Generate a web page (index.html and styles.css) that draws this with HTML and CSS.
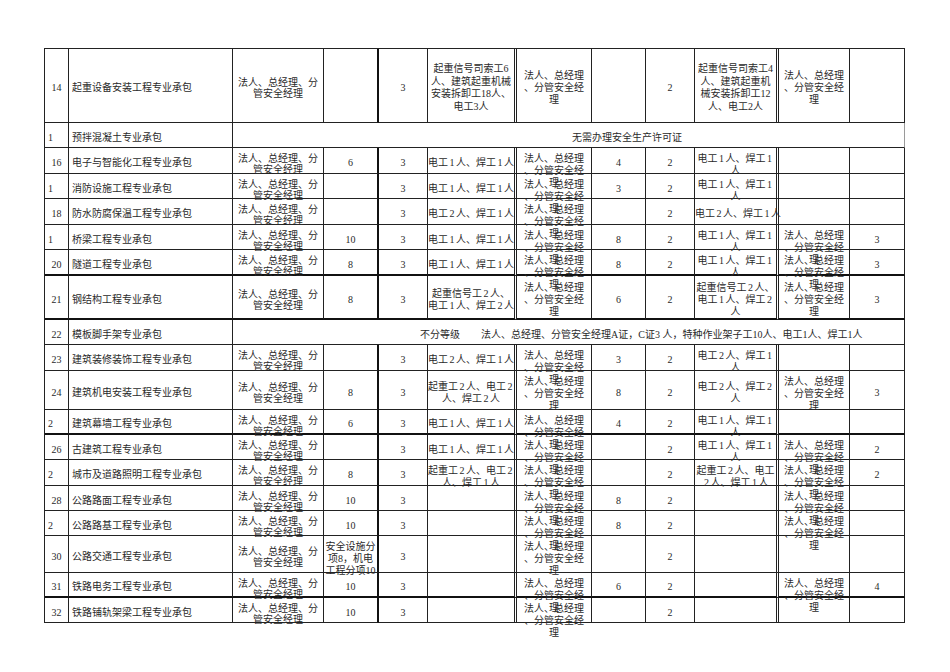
FILE: index.html
```html
<!DOCTYPE html>
<html lang="zh">
<head>
<meta charset="utf-8">
<title>专业承包资质人员配置表</title>
<link rel="stylesheet" href="styles.css">
</head>
<body>
<div class="page">
<div class="sheet">

<div class="r h74">
<div class="c"><span>14</span></div>
<div class="c nm"><span>起重设备安装工程专业承包</span></div>
<div class="c p3"><span>法人、总经理、分<br>管安全经理</span></div>
<div class="c"><span></span></div>
<div class="c"><span>3</span></div>
<div class="c lw"><span>起重信号司索工6<br>人、建筑起重机械<br>安装拆卸工18人、<br>电工3人</span></div>
<div class="c"><span>法人、总经理<br>、分管安全经<br>理</span></div>
<div class="c"><span></span></div>
<div class="c"><span>2</span></div>
<div class="c lw"><span>起重信号司索工4<br>人、建筑起重机<br>械安装拆卸工12<br>人、电工2人</span></div>
<div class="c"><span>法人、总经理<br>、分管安全经<br>理</span></div>
<div class="c"><span></span></div>
</div>

<div class="r h25">
<div class="c nl"><span>1</span></div>
<div class="c nm"><span>预拌混凝土专业承包</span></div>
<div class="c merged m1"><span>无需办理安全生产许可证</span></div>
</div>

<div class="r h26">
<div class="c"><span>16</span></div>
<div class="c nm"><span>电子与智能化工程专业承包</span></div>
<div class="c p3"><span>法人、总经理、分<br>管安全经理</span></div>
<div class="c"><span>6</span></div>
<div class="c"><span>3</span></div>
<div class="c"><span>电工<i>1</i>人、焊工<i>1</i>人</span></div>
<div class="c"><span>法人、总经理<br>、分管安全经<br>理</span></div>
<div class="c"><span>4</span></div>
<div class="c"><span>2</span></div>
<div class="c"><span>电工<i>1</i>人、焊工<i>1</i><br>人</span></div>
<div class="c"><span></span></div>
<div class="c"><span></span></div>
</div>

<div class="r h25">
<div class="c nl"><span>1</span></div>
<div class="c nm"><span>消防设施工程专业承包</span></div>
<div class="c p3"><span>法人、总经理、分<br>管安全经理</span></div>
<div class="c"><span></span></div>
<div class="c"><span>3</span></div>
<div class="c"><span>电工<i>1</i>人、焊工<i>1</i>人</span></div>
<div class="c"><span>法人、总经理<br>、分管安全经<br>理</span></div>
<div class="c"><span>3</span></div>
<div class="c"><span>2</span></div>
<div class="c"><span>电工<i>1</i>人、焊工<i>1</i><br>人</span></div>
<div class="c"><span></span></div>
<div class="c"><span></span></div>
</div>

<div class="r h26">
<div class="c"><span>18</span></div>
<div class="c nm"><span>防水防腐保温工程专业承包</span></div>
<div class="c p3"><span>法人、总经理、分<br>管安全经理</span></div>
<div class="c"><span></span></div>
<div class="c"><span>3</span></div>
<div class="c"><span>电工<i>2</i>人、焊工<i>1</i>人</span></div>
<div class="c"><span>法人、总经理<br>、分管安全经<br>理</span></div>
<div class="c"><span></span></div>
<div class="c"><span>2</span></div>
<div class="c"><span>电工<i>2</i>人、焊工<i>1</i>人</span></div>
<div class="c"><span></span></div>
<div class="c"><span></span></div>
</div>

<div class="r h25">
<div class="c nl"><span>1</span></div>
<div class="c nm"><span>桥梁工程专业承包</span></div>
<div class="c p3"><span>法人、总经理、分<br>管安全经理</span></div>
<div class="c"><span>10</span></div>
<div class="c"><span>3</span></div>
<div class="c"><span>电工<i>1</i>人、焊工<i>1</i>人</span></div>
<div class="c"><span>法人、总经理<br>、分管安全经<br>理</span></div>
<div class="c"><span>8</span></div>
<div class="c"><span>2</span></div>
<div class="c"><span>电工<i>1</i>人、焊工<i>1</i><br>人</span></div>
<div class="c"><span>法人、总经理<br>、分管安全经<br>理</span></div>
<div class="c"><span>3</span></div>
</div>

<div class="r h26 thick">
<div class="c"><span>20</span></div>
<div class="c nm"><span>隧道工程专业承包</span></div>
<div class="c p3"><span>法人、总经理、分<br>管安全经理</span></div>
<div class="c"><span>8</span></div>
<div class="c"><span>3</span></div>
<div class="c"><span>电工<i>1</i>人、焊工<i>1</i>人</span></div>
<div class="c"><span>法人、总经理<br>、分管安全经<br>理</span></div>
<div class="c"><span>8</span></div>
<div class="c"><span>2</span></div>
<div class="c"><span>电工<i>1</i>人、焊工<i>1</i><br>人</span></div>
<div class="c"><span>法人、总经理<br>、分管安全经<br>理</span></div>
<div class="c"><span>3</span></div>
</div>

<div class="r h44 thick">
<div class="c"><span>21</span></div>
<div class="c nm"><span>钢结构工程专业承包</span></div>
<div class="c p3"><span>法人、总经理、分<br>管安全经理</span></div>
<div class="c"><span>8</span></div>
<div class="c"><span>3</span></div>
<div class="c"><span>起重信号工<i>2</i>人、<br>电工<i>1</i>人、焊工<i>2</i>人</span></div>
<div class="c"><span>法人、总经理<br>、分管安全经<br>理</span></div>
<div class="c"><span>6</span></div>
<div class="c"><span>2</span></div>
<div class="c"><span>起重信号工<i>2</i>人、<br>电工<i>1</i>人、焊工<i>2</i><br>人</span></div>
<div class="c"><span>法人、总经理<br>、分管安全经<br>理</span></div>
<div class="c"><span>3</span></div>
</div>

<div class="r h25">
<div class="c"><span>22</span></div>
<div class="c nm"><span>模板脚手架专业承包</span></div>
<div class="c merged m2"><span>不分等级<b class="gap"></b>法人、总经理、分管安全经理A证，C证3 人，特种作业架子工10人、电工1人、焊工1人</span></div>
</div>

<div class="r h26">
<div class="c"><span>23</span></div>
<div class="c nm"><span>建筑装修装饰工程专业承包</span></div>
<div class="c p3"><span>法人、总经理、分<br>管安全经理</span></div>
<div class="c"><span></span></div>
<div class="c"><span>3</span></div>
<div class="c"><span>电工<i>2</i>人、焊工<i>1</i>人</span></div>
<div class="c"><span>法人、总经理<br>、分管安全经<br>理</span></div>
<div class="c"><span>3</span></div>
<div class="c"><span>2</span></div>
<div class="c"><span>电工<i>2</i>人、焊工<i>1</i><br>人</span></div>
<div class="c"><span></span></div>
<div class="c"><span></span></div>
</div>

<div class="r h39">
<div class="c"><span>24</span></div>
<div class="c nm"><span>建筑机电安装工程专业承包</span></div>
<div class="c p3"><span>法人、总经理、分<br>管安全经理</span></div>
<div class="c"><span>8</span></div>
<div class="c"><span>3</span></div>
<div class="c"><span>起重工<i>2</i>人、电工<i>2</i><br>人、焊工<i>2</i>人</span></div>
<div class="c"><span>法人、总经理<br>、分管安全经<br>理</span></div>
<div class="c"><span>8</span></div>
<div class="c"><span>2</span></div>
<div class="c"><span>电工<i>2</i>人、焊工<i>2</i><br>人</span></div>
<div class="c"><span>法人、总经理<br>、分管安全经<br>理</span></div>
<div class="c"><span>3</span></div>
</div>

<div class="r h25 thick">
<div class="c nl"><span>2</span></div>
<div class="c nm"><span>建筑幕墙工程专业承包</span></div>
<div class="c p3"><span>法人、总经理、分<br>管安全经理</span></div>
<div class="c"><span>6</span></div>
<div class="c"><span>3</span></div>
<div class="c"><span>电工<i>1</i>人、焊工<i>1</i>人</span></div>
<div class="c"><span>法人、总经理<br>、分管安全经<br>理</span></div>
<div class="c"><span>4</span></div>
<div class="c"><span>2</span></div>
<div class="c"><span>电工<i>1</i>人、焊工<i>1</i><br>人</span></div>
<div class="c"><span></span></div>
<div class="c"><span></span></div>
</div>

<div class="r h25">
<div class="c"><span>26</span></div>
<div class="c nm"><span>古建筑工程专业承包</span></div>
<div class="c p3"><span>法人、总经理、分<br>管安全经理</span></div>
<div class="c"><span></span></div>
<div class="c"><span>3</span></div>
<div class="c"><span>电工<i>1</i>人、焊工<i>1</i>人</span></div>
<div class="c"><span>法人、总经理<br>、分管安全经<br>理</span></div>
<div class="c"><span></span></div>
<div class="c"><span>2</span></div>
<div class="c"><span>电工<i>1</i>人、焊工<i>1</i><br>人</span></div>
<div class="c"><span>法人、总经理<br>、分管安全经<br>理</span></div>
<div class="c"><span>2</span></div>
</div>

<div class="r h26">
<div class="c nl"><span>2</span></div>
<div class="c nm"><span>城市及道路照明工程专业承包</span></div>
<div class="c p3"><span>法人、总经理、分<br>管安全经理</span></div>
<div class="c"><span>8</span></div>
<div class="c"><span>3</span></div>
<div class="c"><span>起重工<i>2</i>人、电工<i>2</i><br>人、焊工<i>1</i>人</span></div>
<div class="c"><span>法人、总经理<br>、分管安全经<br>理</span></div>
<div class="c"><span></span></div>
<div class="c"><span>2</span></div>
<div class="c"><span>起重工<i>2</i>人、电工<br><i>2</i>人、焊工<i>1</i>人</span></div>
<div class="c"><span>法人、总经理<br>、分管安全经<br>理</span></div>
<div class="c"><span>2</span></div>
</div>

<div class="r h25">
<div class="c"><span>28</span></div>
<div class="c nm"><span>公路路面工程专业承包</span></div>
<div class="c p3"><span>法人、总经理、分<br>管安全经理</span></div>
<div class="c"><span>10</span></div>
<div class="c"><span>3</span></div>
<div class="c"><span></span></div>
<div class="c"><span>法人、总经理<br>、分管安全经<br>理</span></div>
<div class="c"><span>8</span></div>
<div class="c"><span>2</span></div>
<div class="c"><span></span></div>
<div class="c"><span>法人、总经理<br>、分管安全经<br>理</span></div>
<div class="c"><span></span></div>
</div>

<div class="r h25">
<div class="c nl"><span>2</span></div>
<div class="c nm"><span>公路路基工程专业承包</span></div>
<div class="c p3"><span>法人、总经理、分<br>管安全经理</span></div>
<div class="c"><span>10</span></div>
<div class="c"><span>3</span></div>
<div class="c"><span></span></div>
<div class="c"><span>法人、总经理<br>、分管安全经<br>理</span></div>
<div class="c"><span>8</span></div>
<div class="c"><span>2</span></div>
<div class="c"><span></span></div>
<div class="c"><span>法人、总经理<br>、分管安全经<br>理</span></div>
<div class="c"><span></span></div>
</div>

<div class="r h37">
<div class="c"><span>30</span></div>
<div class="c nm"><span>公路交通工程专业承包</span></div>
<div class="c p3"><span>法人、总经理、分<br>管安全经理</span></div>
<div class="c"><span>安全设施分<br>项8，机电<br>工程分项10</span></div>
<div class="c"><span>3</span></div>
<div class="c"><span></span></div>
<div class="c"><span>法人、总经理<br>、分管安全经<br>理</span></div>
<div class="c"><span></span></div>
<div class="c"><span>2</span></div>
<div class="c"><span></span></div>
<div class="c"><span></span></div>
<div class="c"><span></span></div>
</div>

<div class="r h25 thick">
<div class="c"><span>31</span></div>
<div class="c nm"><span>铁路电务工程专业承包</span></div>
<div class="c p3"><span>法人、总经理、分<br>管安全经理</span></div>
<div class="c"><span>10</span></div>
<div class="c"><span>3</span></div>
<div class="c"><span></span></div>
<div class="c"><span>法人、总经理<br>、分管安全经<br>理</span></div>
<div class="c"><span>6</span></div>
<div class="c"><span>2</span></div>
<div class="c"><span></span></div>
<div class="c"><span>法人、总经理<br>、分管安全经<br>理</span></div>
<div class="c"><span>4</span></div>
</div>

<div class="r h25">
<div class="c"><span>32</span></div>
<div class="c nm"><span>铁路铺轨架梁工程专业承包</span></div>
<div class="c p3"><span>法人、总经理、分<br>管安全经理</span></div>
<div class="c"><span>10</span></div>
<div class="c"><span>3</span></div>
<div class="c"><span></span></div>
<div class="c"><span>法人、总经理<br>、分管安全经<br>理</span></div>
<div class="c"><span></span></div>
<div class="c"><span>2</span></div>
<div class="c"><span></span></div>
<div class="c"><span></span></div>
<div class="c"><span></span></div>
</div>

</div>
</div>
</body>
</html>
```

FILE: styles.css
```css
html, body {
  margin: 0;
  padding: 0;
  background: #ffffff;
}

body {
  font-family: "Liberation Serif", "Noto Sans CJK SC", serif;
  font-size: 10px;
  color: #2a2a2a;
  text-autospace: no-autospace;
  min-height: 672px;
}

.page {
  padding: 48px 0 0 44px;
}

.sheet {
  width: 861px;
  box-sizing: border-box;
  border-top: 1px solid #222;
  border-left: 1px solid #222;
}

.r {
  display: grid;
  grid-template-columns: 24px 164px 91px 55px 49px 89px 75px 54px 49px 84px 71px 55px;
  grid-template-rows: 100%;
}

.h25 { height: 25px; }
.h26 { height: 26px; }
.h37 { height: 37px; }
.h39 { height: 39px; }
.h44 { height: 44px; }
.h74 { height: 74px; }

.c {
  box-sizing: border-box;
  min-width: 0;
  min-height: 0;
  display: flex;
  flex-direction: column;
  padding-top: 5px;
  border-right: 1px solid #222;
  border-bottom: 1px solid #222;
  text-align: center;
  line-height: 12px;
  white-space: nowrap;
}

.c > span {
  margin: auto 0;
}

.c i {
  font-style: normal;
  display: inline-block;
  width: 8px;
  text-align: center;
}

.p3 {
  line-height: 11px;
}

.lw {
  line-height: 12.5px;
}

.r > .c:nth-child(4) {
  border-right: 2px solid #111;
}

.r > .c:nth-child(6),
.r > .c:nth-child(10) {
  border-right: 3px double #222;
}

.thick > .c {
  border-bottom-width: 2px;
  border-bottom-color: #111;
}

.nm {
  text-align: left;
  padding-left: 3px;
}

.nl {
  text-align: left;
  padding-left: 3px;
}

.merged {
  grid-column: span 10;
  text-align: left;
}

.m1 {
  padding-left: 339px;
  border-right-color: #9a9a9a;
}

.m2 {
  padding-left: 187px;
}

.gap {
  display: inline-block;
  width: 21px;
}
```
